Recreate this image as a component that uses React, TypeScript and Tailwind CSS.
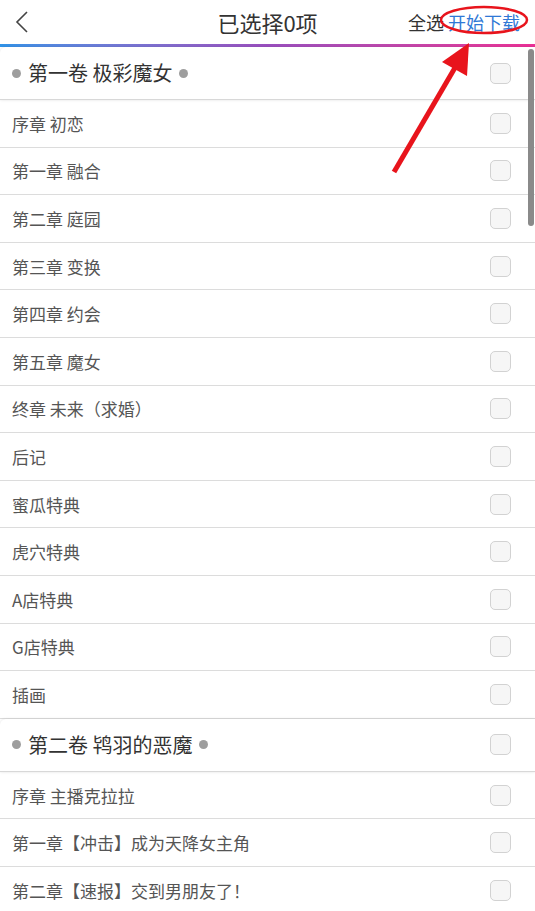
import React from 'react';

type Volume = { title: string; chapters: string[] };

const volumes: Volume[] = [
  {
    title: '第一卷 极彩魔女',
    chapters: ['序章 初恋', '第一章 融合', '第二章 庭园', '第三章 变换', '第四章 约会', '第五章 魔女', '终章 未来（求婚）', '后记', '蜜瓜特典', '虎穴特典', 'A店特典', 'G店特典', '插画'],
  },
  {
    title: '第二卷 鸨羽的恶魔',
    chapters: ['序章 主播克拉拉', '第一章【冲击】成为天降女主角', '第二章【速报】交到男朋友了！'],
  },
];

const Check = () => (
  <div className="w-[21px] h-[21px] rounded-[5px] border border-[#d2d2d2] bg-[#f6f6f6] shrink-0" />
);

export default function App() {
  return (
    <div
      className="relative w-[535px] h-[911px] overflow-hidden bg-white"
      style={{ fontFamily: '"Noto Sans CJK SC", "Noto Sans", sans-serif' }}
    >
      {/* 顶栏 */}
      <header className="h-[44px] flex items-center px-3 relative">
        <svg width="18" height="22" viewBox="0 0 18 22" className="ml-[1px]">
          <path d="M14 1 L4 11 L14 21" fill="none" stroke="#444" strokeWidth="1.6" />
        </svg>
        <h1 className="absolute left-0 right-0 text-center text-[22px] text-[#333] leading-none pointer-events-none">已选择0项</h1>
        <div className="ml-auto flex items-center text-[18px] leading-none mr-[3px]">
          <span className="text-[#333]">全选</span>
          <span className="text-[#2f78d6] ml-[4px]">开始下载</span>
        </div>
      </header>
      <div className="h-[3px] bg-gradient-to-r from-[#2e93e8] via-[#9a4fbf] to-[#ec2f96]" />

      {/* 列表 */}
      <div>
        {volumes.map((v) => (
          <div key={v.title}>
            <div className="h-[53px] flex items-center pl-3 pr-[24px] rounded-tl-[6px] shadow-[0_0_3px_rgba(0,0,0,0.12)] border-b border-[#d8d8d8]">
              <span className="w-[9px] h-[9px] rounded-full bg-[#9e9e9e]" />
              <span className="ml-[7px] text-[20px] text-[#333] leading-none">{v.title}</span>
              <span className="ml-[7px] w-[9px] h-[9px] rounded-full bg-[#9e9e9e]" />
              <div className="ml-auto"><Check /></div>
            </div>
            {v.chapters.map((c) => (
              <div key={c} className="h-[47.6px] flex items-center pl-3 pr-[24px] border-b border-[#dcdcdc]">
                <span className="text-[17px] text-[#555] leading-none">{c}</span>
                <div className="ml-auto"><Check /></div>
              </div>
            ))}
          </div>
        ))}
      </div>

      {/* 滚动条 */}
      <div className="absolute left-[528px] top-[49px] w-[6px] h-[177px] rounded-full bg-[#8a8a8a]" />

      {/* 红色标注 */}
      <svg className="absolute inset-0 pointer-events-none" width="535" height="911">
        <ellipse cx="484" cy="20" rx="43" ry="13" fill="none" stroke="#e8141c" strokeWidth="2.5" />
        <line x1="394" y1="172" x2="456" y2="66" stroke="#e8141c" strokeWidth="5" />
        <polygon points="469,43 442,62 467,76" fill="#e8141c" />
      </svg>
    </div>
  );
}
